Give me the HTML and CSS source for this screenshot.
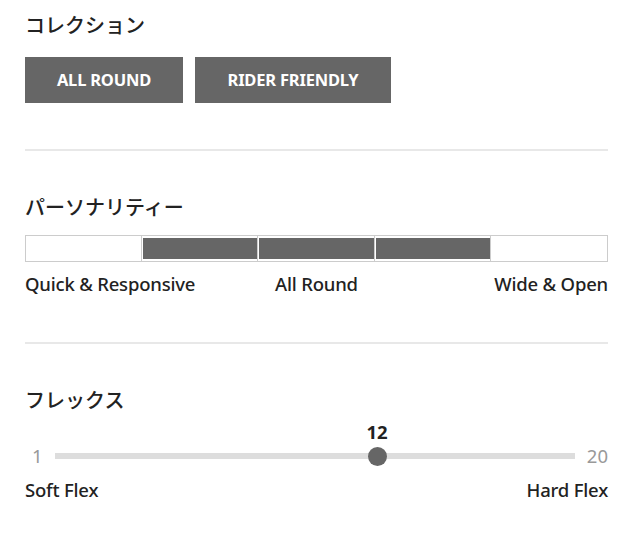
FILE: index.html
```html
<!DOCTYPE html>
<html lang="ja">
<head>
    <meta charset="UTF-8">
    <meta name="viewport" content="width=device-width, initial-scale=1.0">
    <title>Spec</title>
    <link rel="stylesheet" href="styles.css">
</head>
<body>
    <!-- コレクション -->
    <section class="spec">
        <h2 class="spec-title">コレクション</h2>
        <div class="tags">
            <span class="tag">ALL ROUND</span>
            <span class="tag">RIDER FRIENDLY</span>
        </div>
    </section>

    <!-- パーソナリティー -->
    <section class="spec">
        <h2 class="spec-title">パーソナリティー</h2>
        <div class="personality">
            <div class="cell"></div>
            <div class="cell on"></div>
            <div class="cell on"></div>
            <div class="cell on"></div>
            <div class="cell"></div>
        </div>
        <div class="labels three">
            <span>Quick &amp; Responsive</span>
            <span class="mid">All Round</span>
            <span class="end">Wide &amp; Open</span>
        </div>
    </section>

    <!-- フレックス -->
    <section class="spec">
        <h2 class="spec-title">フレックス</h2>
        <div class="flex-row">
            <span class="num">1</span>
            <div class="track">
                <div class="knob" style="left: 62%;">
                    <span class="value">12</span>
                </div>
            </div>
            <span class="num">20</span>
        </div>
        <div class="labels">
            <span>Soft Flex</span>
            <span>Hard Flex</span>
        </div>
    </section>
</body>
</html>
```

FILE: styles.css
```css
/* 基本 */
body {
    margin: 0;
    padding: 0 32px 0 25px;
    background: #fff;
    color: #222;
    font-family: "Noto Sans", "Noto Sans CJK JP", sans-serif;
}

.spec {
    padding: 42px 0 46px;
    border-bottom: 2px solid #e8e8e8;
}

.spec:first-child {
    padding-top: 11px;
}

.spec:last-child {
    border-bottom: none;
}

.spec-title {
    margin: 0 0 14px;
    font-size: 20px;
    font-weight: 500;
    line-height: 28px;
    font-family: "Noto Sans CJK JP", sans-serif;
}

/* コレクション */
.tags {
    display: flex;
    gap: 12px;
    margin-top: 18px;
}

.tag {
    display: inline-block;
    width: 158px;
    height: 46px;
    line-height: 46px;
    text-align: center;
    background: #666;
    color: #fff;
    font-size: 16.5px;
    font-weight: 700;
    letter-spacing: -0.2px;
}

.tag + .tag {
    width: 196px;
}

/* パーソナリティー */
.personality {
    display: flex;
    height: 27px;
    border: 1px solid #ccc;
    box-sizing: border-box;
}

.cell {
    flex: 1;
    border: 2px solid #fff;
    border-left-width: 1px;
    border-right-width: 1px;
}

.cell + .cell {
    box-shadow: -1px 0 0 #ccc;
}

.cell.on {
    background: #666;
}

.labels {
    display: flex;
    justify-content: space-between;
    margin-top: 10px;
    font-size: 18.5px;
    font-weight: 500;
    letter-spacing: -0.2px;
    line-height: 24px;
}

.labels.three {
    display: grid;
    grid-template-columns: 1fr auto 1fr;
}

.labels .end {
    justify-self: end;
}

/* フレックス */
.flex-row {
    display: flex;
    align-items: center;
    gap: 12px;
    margin-top: 30px;
}

.num {
    color: #999;
    font-size: 18.5px;
    line-height: 24px;
    padding-left: 7px;
}

.num:last-child {
    padding-left: 0;
}

.track {
    flex: 1;
    height: 6px;
    background: #ddd;
    position: relative;
}

.knob {
    position: absolute;
    top: 50%;
    width: 19px;
    height: 19px;
    margin: -9.5px 0 0 -9.5px;
    border-radius: 50%;
    background: #666;
}

.value {
    position: absolute;
    bottom: 22px;
    left: 50%;
    transform: translateX(-50%);
    font-size: 18.5px;
    font-weight: 700;
    color: #222;
}

.flex-row + .labels {
    margin-top: 10px;
}
```
